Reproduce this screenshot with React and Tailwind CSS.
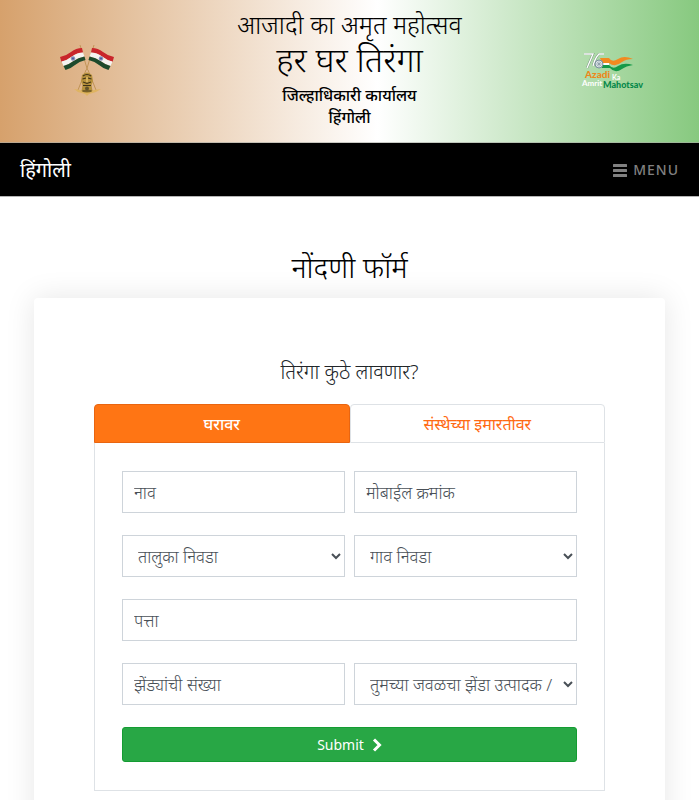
const fieldClass =
  'block h-[42px] w-full min-w-0 border border-[#ced4da] bg-white text-[17px] font-light text-[#495057] placeholder:text-[#495057] placeholder:opacity-100 outline-none';

function TextField({ label, type = 'text', className = '' }) {
  return (
    <input
      type={type}
      aria-label={label}
      placeholder={label}
      className={`${fieldClass} px-[11px] ${className}`}
    />
  );
}

function SelectField({ label }) {
  return (
    <select aria-label={label} className={`${fieldClass} pl-[11px]`}>
      <option>{label}</option>
    </select>
  );
}

function Flag() {
  return (
    <g>
      <path d="M2 15 Q8 14 13 10 T24 6 L25 10.500 Q19 11 14 14.500 T3.500 20Z" fill="#c9252b" />
      <path d="M3.500 19.500 Q9 18.500 14 14.500 T25 10.500 L26.500 14.500 Q20 15.500 15.500 19 T5.500 24Z" fill="#f5f3f0" />
      <path d="M5.500 24 Q11 22.500 15.500 19 T26.500 14.500 L27.500 18 Q21 19.500 17 23 T7.500 28Z" fill="#1d4a2c" />
      <circle cx="15" cy="16.500" r="2.200" fill="#8790bb" />
      <circle cx="15" cy="16.500" r="1" fill="#4b5796" />
    </g>
  );
}

function EmblemLogo() {
  return (
    <svg viewBox="0 0 58 56" className="h-14 w-[58px]" role="img" aria-label="Indian flags and national emblem">
      <path d="M22 3 L29.500 28 M36 3 L28.500 28" fill="none" stroke="#c29557" strokeWidth="1" />
      <path d="M28 28 L20 48 M30 28 L38 48" fill="none" stroke="#b88a46" strokeWidth="0.800" />
      <Flag />
      <g transform="translate(58 0) scale(-1 1)"><Flag /></g>
      <path d="M16 47 L22 48 L29 50 L36 48 L43 47 L38 50 L31 52 L29 54 L27 52 L20 50Z" fill="#dfb462" />
      <path d="M24 33 Q29 28 34 33 L35 39 L33.500 43 L34.500 49 Q29 53 23.500 49 L24.500 43 L23 39Z" fill="#b5903c" />
      <path d="M25 34 Q29 31 33 34 M24.500 37 L28 36 M30 36 L33.500 37 M25 40 L29 41.500 L33 40 M25 43.500 H33 M24.500 49 H33.500" fill="none" stroke="#3e3219" strokeWidth="1.100" />
      <circle cx="29" cy="46.500" r="2" fill="#60512a" />
      <path d="M29 35 V40" stroke="#e0bc66" strokeWidth="1.500" />
    </svg>
  );
}

function AmritLogo() {
  return (
    <svg viewBox="0 0 66 44" className="h-11 w-[66px]" role="img" aria-label="Azadi Ka Amrit Mahotsav">
      <g transform="translate(1 7)">
        <path d="M4 1 H13 L7 15 M24 1 H19 Q15 5 13 13" fill="none" stroke="#718f79" strokeWidth="2.200" />
        <path d="M4 1 H13 L7 15 M24 1 H19 Q15 5 13 13" fill="none" stroke="#fff" strokeWidth="1.400" />
        <path d="M20 5 H29 Q32 10 38 6 Q44 2 53 6 Q46 6 42 9 Q35 15 29 10 H22Z" fill="#f28a20" />
        <path d="M23 10 H29 V12 H23Z" fill="#fff" />
        <path d="M22 12 H29 Q33 17 38 13 Q44 9 53 12 Q46 13 42 16 Q35 21 30 15 H22Z" fill="#159a48" />
        <circle cx="19" cy="11" r="4" fill="#dfe7e8" stroke="#718497" strokeWidth="0.900" />
        <path d="M19 7.500 V14.500 M15.500 11 H22.500 M16.500 8.500 L21.500 13.500 M21.500 8.500 L16.500 13.500" stroke="#718497" strokeWidth="0.500" />
      </g>
      <g fontFamily="Lato, sans-serif">
        <text x="6" y="32" fontSize="10" fontWeight="900" fill="#ed8719">Azadi</text>
        <text x="33" y="34" fontSize="7" fontWeight="700" fill="#fff">Ka</text>
        <text x="3" y="40" fontSize="8" fontWeight="700" fill="#fff">Amrit</text>
        <text x="24" y="42" fontSize="9" fontWeight="900" fill="#07884a">Mahotsav</text>
      </g>
    </svg>
  );
}

function BarsIcon() {
  return (
    <svg viewBox="0 0 14 14" className="size-[14px]" fill="currentColor" aria-hidden="true">
      <rect x="0" y="1" width="14" height="3" rx="0.500" />
      <rect x="0" y="6" width="14" height="3" rx="0.500" />
      <rect x="0" y="11" width="14" height="3" rx="0.500" />
    </svg>
  );
}

function ChevronIcon() {
  return (
    <svg viewBox="0 0 10 14" className="h-[14px] w-[10px]" fill="none" stroke="currentColor" strokeWidth="3" aria-hidden="true">
      <path d="M2 1.500 L7.500 7 L2 12.500" />
    </svg>
  );
}

export default function App() {
  return (
    <div className="min-h-screen bg-white font-['Noto_Sans',sans-serif] text-base leading-6 text-black">
      <header className="grid grid-cols-[1fr_2fr_1fr] border-b border-[#a9aaa4]/60 bg-[linear-gradient(90deg,#d6a16c_0%,#ffffff_54%,#87c97f_100%)] pt-2 pb-[14px]">
        <div className="flex items-center justify-center pt-1">
          <EmblemLogo />
        </div>
        <div className="text-center">
          <h2 className="text-[25px] leading-8 font-light">आजादी का अमृत महोत्सव</h2>
          <h1 className="text-[34px] leading-[38px] font-light">हर घर तिरंगा</h1>
          <p className="pt-[6px] leading-[22px] font-medium">जिल्हाधिकारी कार्यालय<br />हिंगोली</p>
        </div>
        <div className="flex items-center justify-center">
          <AmritLogo />
        </div>
      </header>

      <nav className="flex h-[54px] items-center justify-between border-b border-[#b5b5b5] bg-black px-5">
        <a href="#home" className="text-xl leading-8 text-white">हिंगोली</a>
        <button type="button" className="flex items-center gap-[6px] text-sm font-medium tracking-[1px] text-[#808080]">
          <BarsIcon />
          MENU
        </button>
      </nav>

      <main className="px-[34px] pt-[50px]">
        <h2 className="text-center text-[29px] leading-10 font-light">नोंदणी फॉर्म</h2>
        <section className="mt-[11px] rounded bg-white px-[60px] pt-[60px] pb-[60px] shadow-[0_0_30px_rgba(0,0,0,0.1)]">
          <h3 className="text-center text-xl leading-7 font-light text-[#212529]">तिरंगा कुठे लावणार?</h3>
          <div role="tablist" className="mt-[18px] grid grid-cols-2">
            <button type="button" role="tab" aria-selected="true" className="h-[39px] rounded-t border border-[#e96510] bg-[#ff7514] font-medium text-white">घरावर</button>
            <button type="button" role="tab" aria-selected="false" className="h-[39px] rounded-t border border-[#dee2e6] text-[#ff6a13]">संस्थेच्या इमारतीवर</button>
          </div>
          <form className="grid grid-cols-2 gap-x-[9px] gap-y-[22px] border border-t-0 border-[#dee2e6] px-[27px] pt-7 pb-7" onSubmit={(event) => event.preventDefault()}>
            <TextField label="नाव" />
            <TextField label="मोबाईल क्रमांक" type="tel" />
            <SelectField label="तालुका निवडा" />
            <SelectField label="गाव निवडा" />
            <TextField label="पत्ता" className="col-span-2" />
            <TextField label="झेंड्यांची संख्या" />
            <SelectField label="तुमच्या जवळचा झेंडा उत्पादक /" />
            <button type="submit" className="col-span-2 flex h-[35px] items-center justify-center gap-2 rounded-[3px] border border-[#149c32] bg-[#28a745] text-sm text-white">
              Submit
              <ChevronIcon />
            </button>
          </form>
        </section>
      </main>
    </div>
  );
}
